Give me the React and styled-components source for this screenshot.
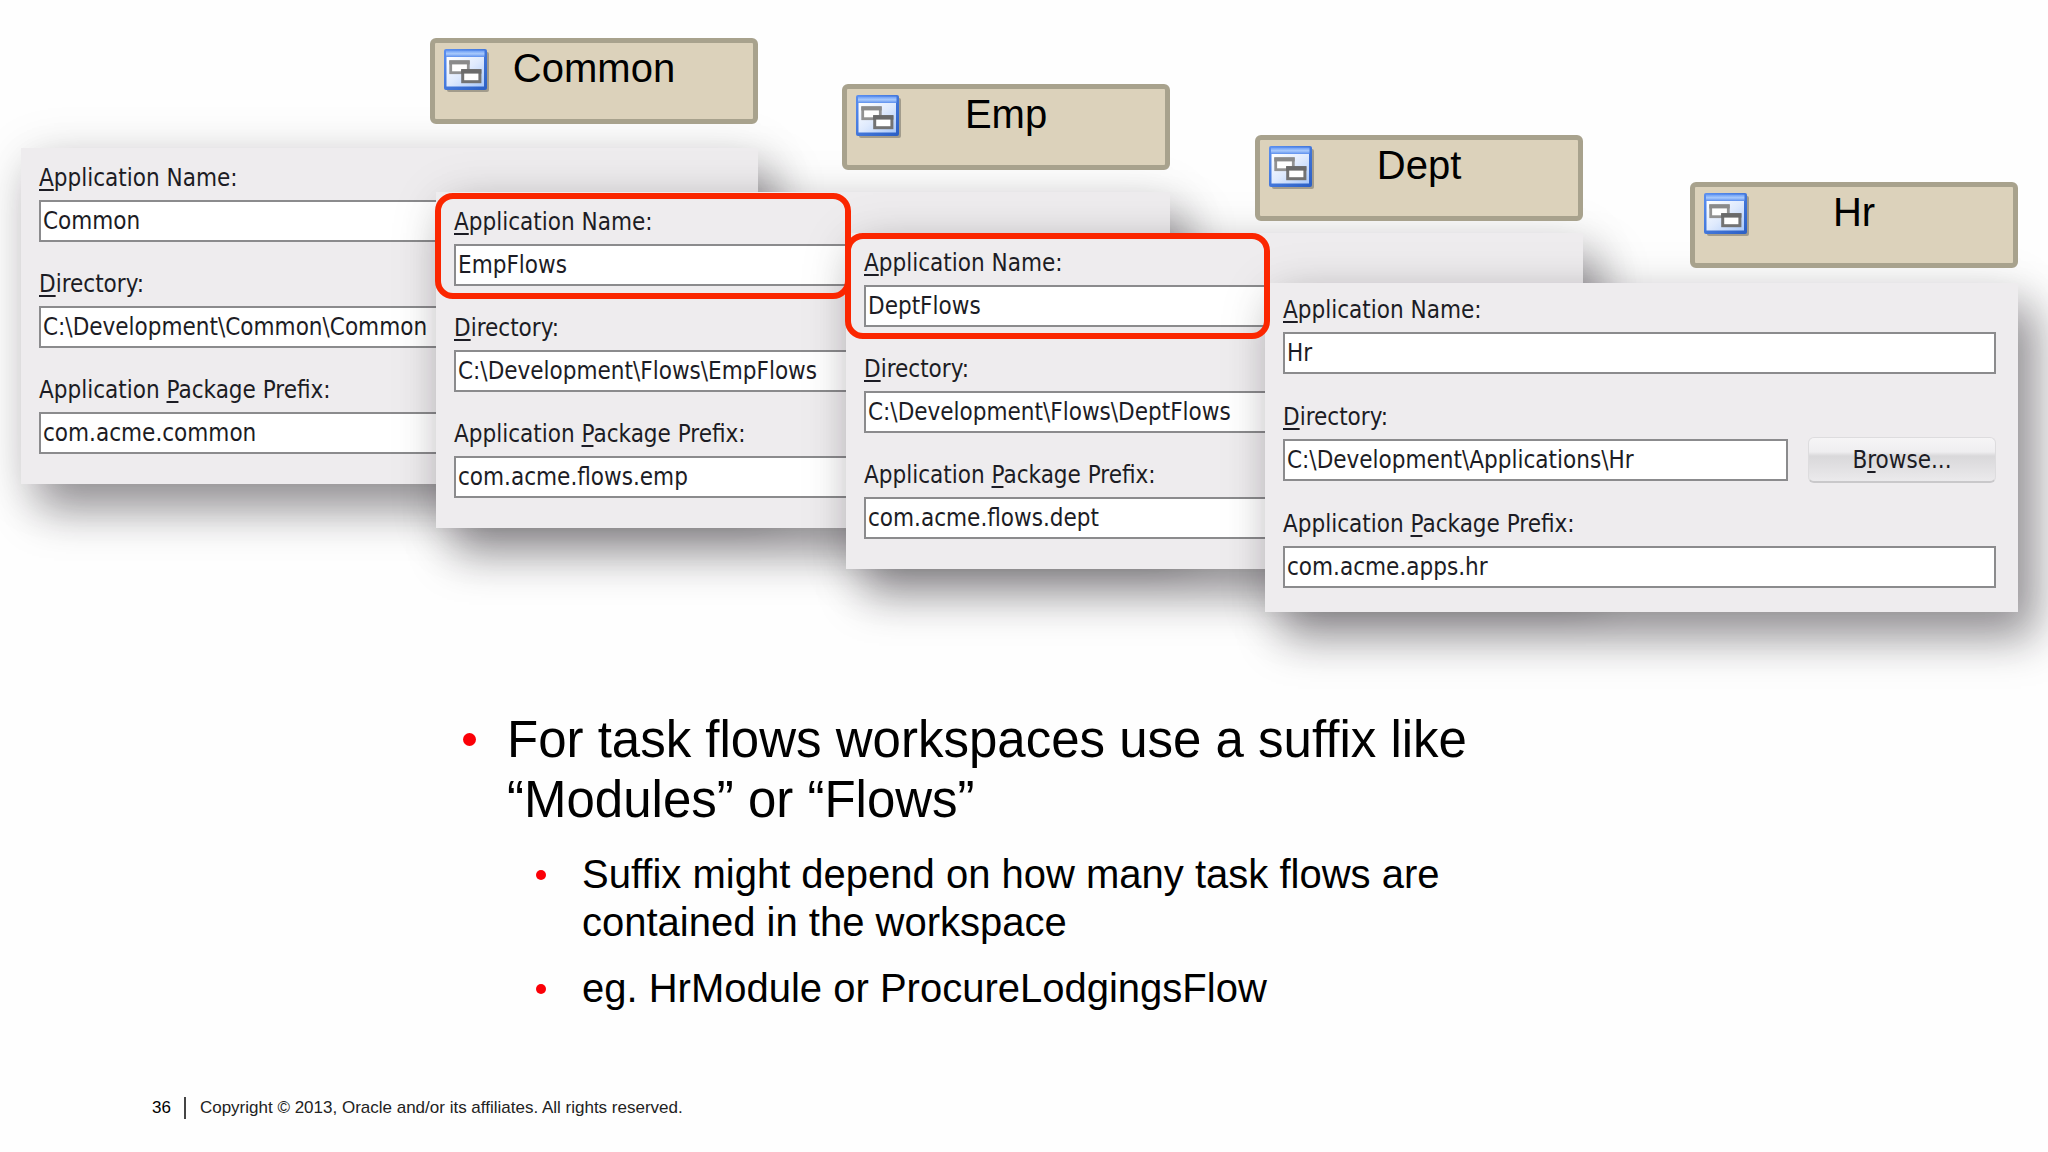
import React from 'react';
import styled, { createGlobalStyle } from 'styled-components';

const workspaces = [
	{
		id: 'common',
		tag: 'Common',
		columns: '1 / 3',
		top: 38,
		gap: 24,
		name: 'Common',
		directory: 'C:\\Development\\Common\\Common',
		prefix: 'com.acme.common',
	},
	{
		id: 'emp',
		tag: 'Emp',
		columns: '2 / 5',
		top: 84,
		gap: 22,
		name: 'EmpFlows',
		directory: 'C:\\Development\\Flows\\EmpFlows',
		prefix: 'com.acme.flows.emp',
	},
	{
		id: 'dept',
		tag: 'Dept',
		columns: '4 / 7',
		top: 135,
		gap: 12,
		name: 'DeptFlows',
		directory: 'C:\\Development\\Flows\\DeptFlows',
		prefix: 'com.acme.flows.dept',
	},
	{
		id: 'hr',
		tag: 'Hr',
		columns: '6 / 8',
		top: 182,
		gap: 15,
		name: 'Hr',
		directory: 'C:\\Development\\Applications\\Hr',
		prefix: 'com.acme.apps.hr',
		front: true,
	},
];

const WorkspaceIcon = () => (
	<svg width="46" height="44" viewBox="0 0 46 44" aria-hidden="true">
		<defs>
			<linearGradient id="frame" x1="0" y1="0" x2="1" y2="1">
				<stop offset="0" stopColor="#5b8ff0" />
				<stop offset="1" stopColor="#2b5fc4" />
			</linearGradient>
			<linearGradient id="pane" x1="0" y1="0" x2="1" y2="1">
				<stop offset="0" stopColor="#ffffff" />
				<stop offset="0.5" stopColor="#dfeafd" />
				<stop offset="1" stopColor="#a9c8fa" />
			</linearGradient>
			<linearGradient id="titlebar" x1="0" y1="0" x2="0" y2="1">
				<stop offset="0" stopColor="#6a9cf5" />
				<stop offset="0.5" stopColor="#a9cafc" />
				<stop offset="1" stopColor="#5c8fee" />
			</linearGradient>
		</defs>
		<rect x="3" y="3" width="42" height="40" rx="2" fill="#8f8a7c" opacity="0.75" />
		<rect x="0" y="0" width="43" height="41" rx="2" fill="url(#frame)" />
		<rect x="2" y="1.5" width="38.5" height="6.5" fill="url(#titlebar)" />
		<rect x="2.5" y="8" width="37.5" height="29.5" fill="url(#pane)" />
		<rect x="6.7" y="12.7" width="17.6" height="11" fill="#fff" stroke="#929292" strokeWidth="2.8" />
		<path d="M5.3 13.4h20.4" stroke="#8a8a8a" strokeWidth="4" />
		<rect x="18.7" y="21.7" width="17.2" height="11" fill="#fff" stroke="#737373" strokeWidth="3" />
		<path d="M17.2 22.4h20.2" stroke="#6a6a6a" strokeWidth="4.4" />
	</svg>
);

const Workspace = ({ workspace }) => {
	const { id, tag, columns, top, gap, name, directory, prefix, front } = workspace;

	return (
		<WorkspaceStyled $columns={columns} $top={top} $gap={gap}>
			<Tag>
				<WorkspaceIcon />
				<span>{tag}</span>
			</Tag>
			<Dialog $front={front}>
				<Field>
					<label htmlFor={`${id}-name`}>
						<u>A</u>pplication Name:
					</label>
					<TextInput id={`${id}-name`} defaultValue={name} />
				</Field>
				<Field>
					<label htmlFor={`${id}-directory`}>
						<u>D</u>irectory:
					</label>
					<DirectoryRow>
						<TextInput id={`${id}-directory`} defaultValue={directory} />
						{front && (
							<BrowseButton type="button">
								B<u>r</u>owse...
							</BrowseButton>
						)}
					</DirectoryRow>
				</Field>
				<Field>
					<label htmlFor={`${id}-prefix`}>
						Application <u>P</u>ackage Prefix:
					</label>
					<TextInput id={`${id}-prefix`} defaultValue={prefix} />
				</Field>
			</Dialog>
		</WorkspaceStyled>
	);
};

const App = () => {
	return (
		<>
			<GlobalStyle />
			<Slide>
				<Cascade>
					{workspaces.map((workspace) => (
						<Workspace key={workspace.id} workspace={workspace} />
					))}
					<Highlight $columns="2 / 4" $top={193} />
					<Highlight $columns="4 / 6" $top={233} />
				</Cascade>

				<Points>
					<li>
						For task flows workspaces use a suffix like “Modules” or “Flows”
						<SubPoints>
							<li>
								Suffix might depend on how many task flows are contained in
								the workspace
							</li>
							<li>eg. HrModule or ProcureLodgingsFlow</li>
						</SubPoints>
					</li>
				</Points>

				<Footer>
					<strong>36</strong>
					<p>
						Copyright © 2013, Oracle and/or its affiliates. All rights reserved.
					</p>
				</Footer>
			</Slide>
		</>
	);
};

// CSS
const GlobalStyle = createGlobalStyle`
	* {
		box-sizing: border-box;
	}

	body {
		margin: 0;
		background: #fefefe;
		color: #000;
		font-family: 'Liberation Sans', Arial, sans-serif;
		overflow-x: hidden;
	}
`;

const Slide = styled.main`
	display: flex;
	flex-direction: column;
	min-height: 100vh;
	overflow: hidden;
`;

// Every workspace spans a few of these columns, so each one overlaps the one before
const Cascade = styled.section`
	display: grid;
	grid-template-columns:
		minmax(0, 415fr) minmax(0, 322fr) minmax(0, 88fr) minmax(0, 324fr)
		minmax(0, 95fr) minmax(0, 318fr) minmax(0, 435fr);
	align-items: start;
	padding: 0 30px 0 21px;
`;

const WorkspaceStyled = styled.article`
	grid-row: 1;
	grid-column: ${(props) => props.$columns};
	display: flex;
	flex-direction: column;
	gap: ${(props) => props.$gap}px;
	padding-top: ${(props) => props.$top}px;
`;

const Tag = styled.div`
	display: grid;
	align-self: flex-end;
	align-items: start;
	position: relative;
	z-index: 1;
	width: 328px;
	height: 86px;
	padding: 2px 9px;
	border: 5px solid #a8a28d;
	border-radius: 6px;
	background: #dcd2bb;
	font-size: 40px;
	line-height: 46px;

	svg,
	span {
		grid-area: 1 / 1;
	}

	svg {
		margin-top: 4px;
	}

	span {
		justify-self: center;
	}
`;

const Dialog = styled.form`
	display: flex;
	flex-direction: column;
	gap: ${(props) => (props.$front ? 29 : 28)}px;
	padding: ${(props) => (props.$front ? '13px 22px 24px 18px' : '16px 22px 30px 18px')};
	background: #eeecee;
	box-shadow:
		18px 26px 42px rgba(20, 16, 22, 0.4),
		4px 8px 50px rgba(20, 16, 22, 0.13);
	color: #1c1c24;
	font-family: 'DejaVu Sans Condensed', 'Open Sans', sans-serif;
	font-size: 24px;
	line-height: 28px;

	u {
		text-decoration-thickness: 2px;
		text-underline-offset: 3px;
		text-decoration-skip-ink: none;
	}
`;

const Field = styled.div`
	display: flex;
	flex-direction: column;
	gap: 8px;
`;

const DirectoryRow = styled.div`
	display: flex;
	align-items: center;
	gap: 20px;
	height: 42px;
`;

const TextInput = styled.input`
	width: 100%;
	min-width: 0;
	height: 42px;
	padding: 0 2px;
	border: 2px solid #8b8b8d;
	border-radius: 0;
	outline: none;
	background: #fff;
	color: inherit;
	font: inherit;
`;

const BrowseButton = styled.button`
	flex: 0 0 188px;
	height: 46px;
	padding: 0;
	border: 1px solid #dddcde;
	border-bottom: 2px solid #c9c8ca;
	border-radius: 6px;
	background: linear-gradient(#f6f5f6, #efeef0 32%, #d9d8da 42%, #ebeaec);
	color: inherit;
	font: inherit;
	cursor: pointer;
`;

const Highlight = styled.div`
	grid-row: 1;
	grid-column: ${(props) => props.$columns};
	z-index: 1;
	height: 106px;
	margin: ${(props) => props.$top}px -5px 0 -1px;
	border: 6px solid #fb2600;
	border-radius: 18px;
	pointer-events: none;
`;

const Points = styled.ul`
	width: 1096px;
	max-width: 100%;
	margin: 98px 0 0 461px;
	padding: 0 0 0 46px;
	list-style: none;
	font-size: 51px;
	line-height: 60px;

	li {
		position: relative;
	}

	li::before {
		content: '';
		position: absolute;
		top: 23px;
		left: -44px;
		width: 13px;
		height: 13px;
		border-radius: 50%;
		background: #fb0007;
	}
`;

const SubPoints = styled.ul`
	display: flex;
	flex-direction: column;
	gap: 18px;
	margin: 20px 0 0;
	padding: 0 0 0 75px;
	list-style: none;
	font-size: 40px;
	line-height: 48px;

	li::before {
		top: 20px;
		left: -46px;
		width: 10px;
		height: 10px;
	}
`;

const Footer = styled.footer`
	display: flex;
	align-items: center;
	margin-top: auto;
	padding: 0 152px 33px;
	font-size: 17px;
	line-height: 22px;

	strong {
		padding-right: 13px;
		border-right: 2px solid #444;
		font-weight: 400;
	}

	p {
		margin: 0 0 0 14px;
		color: #222;
	}
`;

export default App;
